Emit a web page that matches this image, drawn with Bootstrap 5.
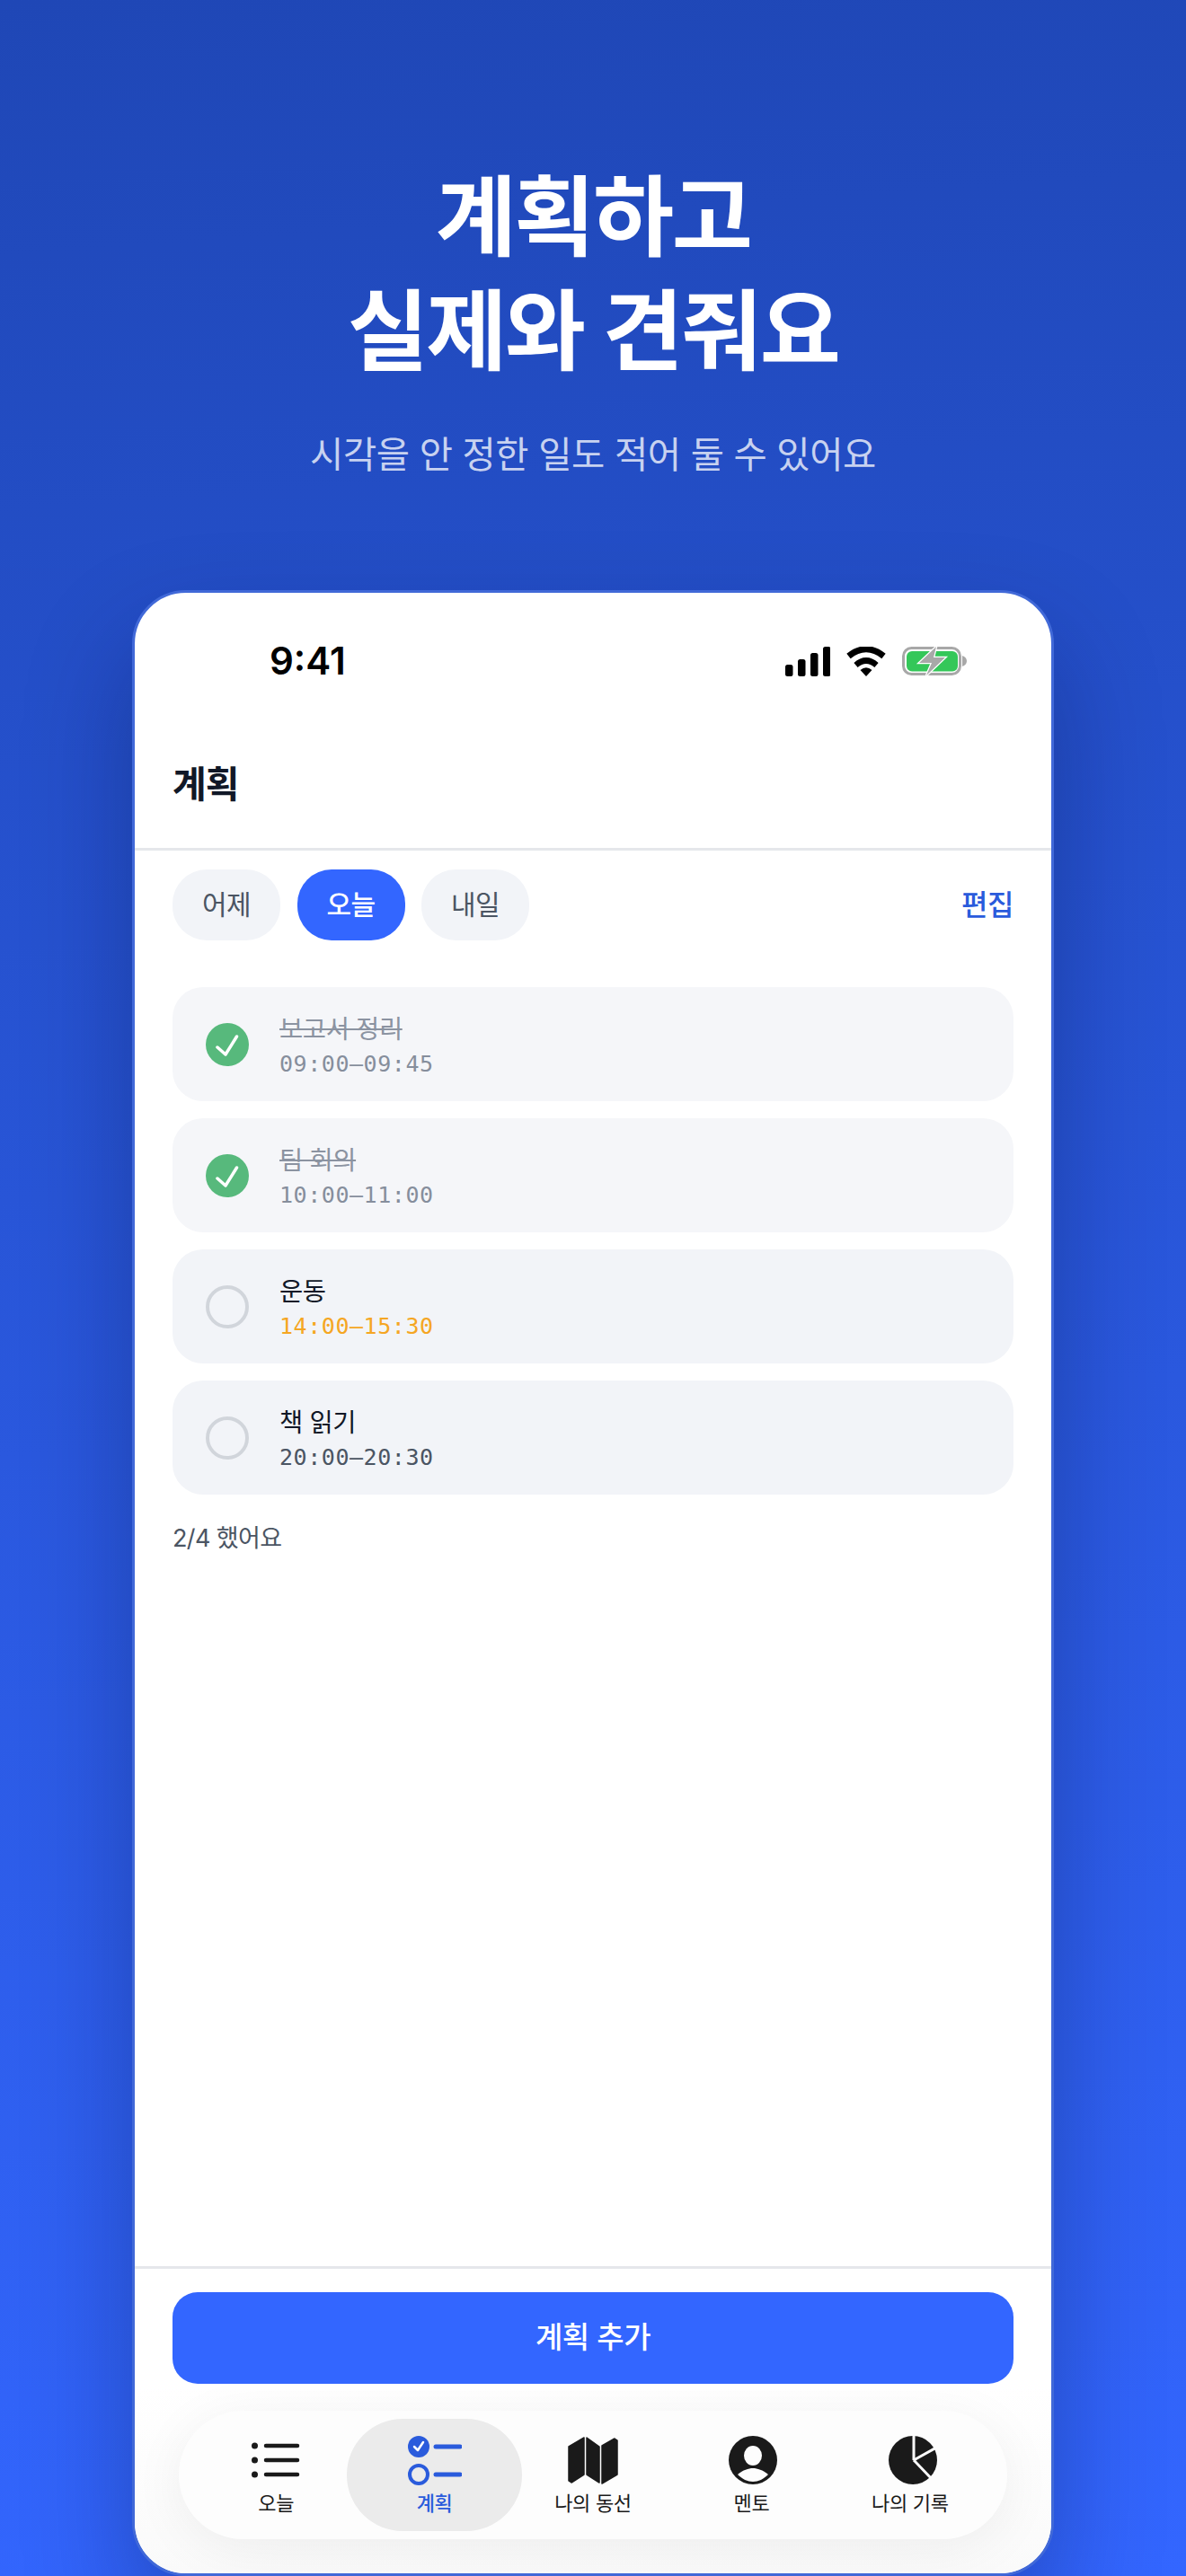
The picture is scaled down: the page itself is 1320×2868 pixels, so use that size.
<!DOCTYPE html>
<html lang="ko">
<head>
  <meta charset="UTF-8">
  <title>계획</title>
  <link href="https://cdn.jsdelivr.net/npm/bootstrap@5.3.0/dist/css/bootstrap.min.css" rel="stylesheet">
  <style>
    html, body { height: 2868px; overflow: hidden; }
    body {
      font-family: Inter, "Noto Sans CJK KR", sans-serif;
      background: linear-gradient(176deg, #1f47b6 0%, #3366ff 100%);
    }
    /* 상단 문구 */
    .hero { height: 657px; padding-top: 178px; }
    .hero-title { font-size: 98px; font-weight: 700; line-height: 127px; letter-spacing: -2.5px; color: #fff; margin: 0; }
    .hero-sub { font-size: 40.5px; line-height: 56px; color: rgba(255,255,255,.76); margin: 47px 0 0; letter-spacing: -.4px; }

    /* 폰 프레임 */
    .phone {
      width: 1026px; height: 2211px; background: #fff;
      border: 3px solid #4169d8; border-radius: 60px; overflow: hidden;
      box-shadow: 0 60px 120px rgba(0,10,50,.3);
    }
    .status-row { height: 120px; padding: 51px 94px 0 150px; }
    .status-icons-wrap { padding-top: 9px; }
    .clock { font-size: 42px; font-weight: 600; line-height: 50px; color: #000; }
    .status-icons { gap: 18px; }
    .screen-head { height: 167px; padding: 59px 42px 0; border-bottom: 3px solid #e5e7eb; }
    .screen-title { font-size: 41px; font-weight: 700; line-height: 68px; color: #111827; letter-spacing: -1px; margin: 0; }

    .tab-row { padding: 21px 42px 0; }
    .day-tabs { gap: 18.5px; }
    .day-tab {
      width: 120px; height: 79px; border-radius: 38px; border: 0; padding: 0;
      font-size: 30px; font-weight: 400; background: #f2f4f8; color: #4b5563; letter-spacing: -.5px;
    }
    .day-tab.on { background: #3366ff; color: #fff; font-weight: 500; }
    .edit-link { font-size: 32px; font-weight: 500; color: #2a5bdc; text-decoration: none; letter-spacing: -.5px; }

    .plan-list { padding: 52px 42px 0; gap: 19px; }
    .plan-item { height: 127px; border-radius: 34px; background: #f2f4f8; padding-left: 37px; gap: 34px; }
    .plan-item.done { background: #f5f6f9; }
    .plan-text { padding-top: 4px; }
    .plan-name { font-size: 28.5px; line-height: 40px; color: #111827; letter-spacing: -.4px; }
    .done .plan-name { color: #8b93a1; text-decoration: line-through; }
    .plan-time { font-family: "DejaVu Sans Mono", monospace; font-size: 25px; letter-spacing: .55px; line-height: 38px; color: #4b5563; }
    .done .plan-time { color: #868e9c; }
    .plan-time.now { color: #f5a623; }
    .progress-note { font-size: 27px; line-height: 40px; color: #4b5563; padding: 29px 42px 0; letter-spacing: -.6px; }

    .foot { border-top: 3px solid #e5e7eb; background: linear-gradient(180deg, #fff 0 130px, #fafafa 100%); padding: 26px 42px 0; height: 342px; }
    .add-btn {
      height: 102px; border: 0; border-radius: 28px; background: #3366ff; color: #fff;
      font-size: 33px; font-weight: 500; letter-spacing: -.4px;
    }
    .add-btn:hover { background: #3366ff; color: #fff; }
    .tabbar {
      margin: 30px 7px 0; height: 143px; padding: 9px 20px; border-radius: 72px; background: #fdfdfd;
      display: grid; grid-template-columns: repeat(5, 1fr);
      box-shadow: 0 10px 60px rgba(0,0,0,.06);
    }
    .tab-cell { font-size: 22px; line-height: 30px; color: #1a1a1a; letter-spacing: -.3px; padding-top: 18px; white-space: nowrap; }
    .tab-cell.on { margin: 0 -9px; background: #ebebeb; border-radius: 62px; color: #2a5bdc; font-weight: 500; }
    .tab-cell svg { display: block; height: 56px; margin-bottom: 5px; }
  </style>
</head>
<body>
  <div class="hero text-center">
    <h1 class="hero-title">계획하고<br>실제와 견줘요</h1>
    <p class="hero-sub">시각을 안 정한 일도 적어 둘 수 있어요</p>
  </div>

  <div class="phone mx-auto d-flex flex-column">
    <div class="status-row d-flex justify-content-between align-items-start">
      <span class="clock">9:41</span>
      <div class="status-icons status-icons-wrap d-flex align-items-center">
        <svg width="50" height="33" viewBox="0 0 50 33"><rect x="0" y="20" width="8.5" height="13" rx="2.5"/><rect x="14" y="14" width="8.5" height="19" rx="2.5"/><rect x="28" y="7" width="8.5" height="26" rx="2.5"/><rect x="42" y="0" width="8.5" height="33" rx="2.5"/></svg>
        <svg width="44" height="33" viewBox="0 0 44 33"><path d="M2.500 10.500Q22-5 41.500 10.500" fill="none" stroke="#000" stroke-width="7"/><path d="M10.500 20.500Q22 10.500 33.500 20.500" fill="none" stroke="#000" stroke-width="6.500"/><path d="M15.500 26Q22 20.500 28.500 26L22 33Z"/></svg>
        <svg width="72" height="33" viewBox="0 0 72 33"><rect x="1.5" y="1.5" width="63" height="29" rx="9" fill="none" stroke="#a8a8a8" stroke-width="3"/><rect x="5" y="5" width="57" height="22.5" rx="6" fill="#34c759"/><path d="M67 10c3 1 5 3 5 6s-2 5-5 6z" fill="#a8a8a8"/><path d="M38 0 19 18H33L27 32 48 12H35Z" fill="#a8a8a8" stroke="#fff" stroke-width="2.5" paint-order="stroke"/></svg>
      </div>
    </div>

    <div class="screen-head"><h2 class="screen-title">계획</h2></div>

    <div class="tab-row d-flex align-items-center justify-content-between">
      <div class="day-tabs d-flex">
        <button class="day-tab" type="button">어제</button>
        <button class="day-tab on" type="button">오늘</button>
        <button class="day-tab" type="button">내일</button>
      </div>
      <a class="edit-link" href="#">편집</a>
    </div>

    <div class="plan-list d-flex flex-column">
      <div class="plan-item done d-flex align-items-center">
        <svg width="48" height="48" viewBox="0 0 48 48"><circle cx="24" cy="24" r="24" fill="#57b97c"/><path d="M13 27l9 8 12.500-20" fill="none" stroke="#fff" stroke-width="3.500" stroke-linecap="round" stroke-linejoin="round"/></svg>
        <div class="plan-text"><div class="plan-name">보고서 정리</div><div class="plan-time">09:00–09:45</div></div>
      </div>
      <div class="plan-item done d-flex align-items-center">
        <svg width="48" height="48" viewBox="0 0 48 48"><circle cx="24" cy="24" r="24" fill="#57b97c"/><path d="M13 27l9 8 12.500-20" fill="none" stroke="#fff" stroke-width="3.500" stroke-linecap="round" stroke-linejoin="round"/></svg>
        <div class="plan-text"><div class="plan-name">팀 회의</div><div class="plan-time">10:00–11:00</div></div>
      </div>
      <div class="plan-item d-flex align-items-center">
        <svg width="48" height="48" viewBox="0 0 48 48"><circle cx="24" cy="24" r="22" fill="none" stroke="#d1d5db" stroke-width="4"/></svg>
        <div class="plan-text"><div class="plan-name">운동</div><div class="plan-time now">14:00–15:30</div></div>
      </div>
      <div class="plan-item d-flex align-items-center">
        <svg width="48" height="48" viewBox="0 0 48 48"><circle cx="24" cy="24" r="22" fill="none" stroke="#d1d5db" stroke-width="4"/></svg>
        <div class="plan-text"><div class="plan-name">책 읽기</div><div class="plan-time">20:00–20:30</div></div>
      </div>
    </div>
    <div class="progress-note">2/4 했어요</div>

    <div class="foot mt-auto">
      <button class="btn add-btn w-100" type="button">계획 추가</button>
      <nav class="tabbar">
        <div class="tab-cell text-center">
          <svg class="mx-auto" width="54" height="56" viewBox="0 0 54 56"><g fill="#1a1a1a"><circle cx="3.500" cy="12" r="3.500"/><circle cx="3.500" cy="28" r="3.500"/><circle cx="3.500" cy="44" r="3.500"/></g><g stroke="#1a1a1a" stroke-width="4.500" stroke-linecap="round"><path d="M16 12H51"/><path d="M16 28H51"/><path d="M16 44H51"/></g></svg>
          오늘
        </div>
        <div class="tab-cell on text-center">
          <svg class="mx-auto" width="60" height="56" viewBox="0 0 60 56"><circle cx="12" cy="13" r="12" fill="#2a5bdc"/><path d="M7 13l4 4 6-9" fill="none" stroke="#fff" stroke-width="2.500" stroke-linecap="round" stroke-linejoin="round"/><circle cx="12" cy="44" r="10" fill="none" stroke="#2a5bdc" stroke-width="4"/><g stroke="#2a5bdc" stroke-width="5" stroke-linecap="round"><path d="M31 13H58"/><path d="M31 44H58"/></g></svg>
          계획
        </div>
        <div class="tab-cell text-center">
          <svg class="mx-auto" width="56" height="56" viewBox="0 0 56 56"><g fill="#1a1a1a" stroke="#1a1a1a" stroke-width="1.500" stroke-linejoin="round"><path d="M1 13 18 3V44L4 53 1 51Z"/><path d="M21 3 35 13V53L21 44Z"/><path d="M38 12 52 4 55 6V44L38 54Z"/></g></svg>
          나의 동선
        </div>
        <div class="tab-cell text-center">
          <svg class="mx-auto" width="58" height="56" viewBox="-4 0 58 56"><circle cx="27" cy="28" r="27" fill="#1a1a1a"/><ellipse cx="27" cy="23" rx="10" ry="11" fill="#fdfdfd"/><path d="M10 44C16 39 22 37 27 37S38 39 44 44C39 49 33 52 27 52S15 49 10 44Z" fill="#fdfdfd"/></svg>
          멘토
        </div>
        <div class="tab-cell text-center">
          <svg class="mx-auto" width="60" height="56" viewBox="-6 0 60 56"><circle cx="27" cy="28" r="27" fill="#1a1a1a"/><g stroke="#fdfdfd" stroke-width="3" fill="none"><path d="M28 0V28"/><path d="M28 28 55 13"/><path d="M28 28 49 50"/></g></svg>
          나의 기록
        </div>
      </nav>
    </div>
  </div>

  <script src="https://cdn.jsdelivr.net/npm/bootstrap@5.3.0/dist/js/bootstrap.bundle.min.js"></script>
</body>
</html>
